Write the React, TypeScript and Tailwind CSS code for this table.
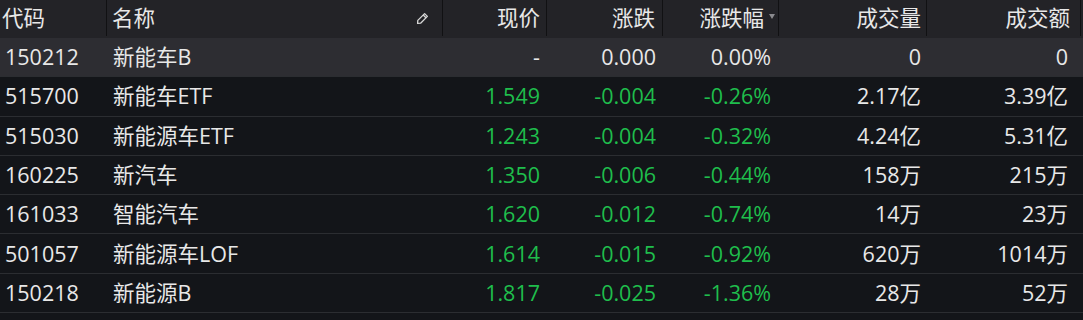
import React from "react";

type Row = {
  code: string;
  name: string;
  price: string;
  change: string;
  pct: string;
  vol: string;
  amt: string;
  down: boolean;
};

const rows: Row[] = [
  { code: "150212", name: "新能车B", price: "-", change: "0.000", pct: "0.00%", vol: "0", amt: "0", down: false },
  { code: "515700", name: "新能车ETF", price: "1.549", change: "-0.004", pct: "-0.26%", vol: "2.17亿", amt: "3.39亿", down: true },
  { code: "515030", name: "新能源车ETF", price: "1.243", change: "-0.004", pct: "-0.32%", vol: "4.24亿", amt: "5.31亿", down: true },
  { code: "160225", name: "新汽车", price: "1.350", change: "-0.006", pct: "-0.44%", vol: "158万", amt: "215万", down: true },
  { code: "161033", name: "智能汽车", price: "1.620", change: "-0.012", pct: "-0.74%", vol: "14万", amt: "23万", down: true },
  { code: "501057", name: "新能源车LOF", price: "1.614", change: "-0.015", pct: "-0.92%", vol: "620万", amt: "1014万", down: true },
  { code: "150218", name: "新能源B", price: "1.817", change: "-0.025", pct: "-1.36%", vol: "28万", amt: "52万", down: true },
];

const font = { fontFamily: '"Open Sans", "Noto Sans CJK SC", sans-serif' };

function Pencil() {
  return (
    <svg width="13" height="13" viewBox="0 0 13 13" fill="none" stroke="#d8d8d8" strokeWidth="1.3">
      <path d="M8.6 1.6 L11.4 4.4 L4.6 11.2 L1.6 11.4 L1.8 8.4 Z" strokeLinejoin="round" />
      <path d="M7.2 3 L10 5.8" />
    </svg>
  );
}

export default function App() {
  return (
    <div className="w-[1083px] h-[320px] bg-[#131519] overflow-hidden text-[21.5px] text-[#e8e8e8]" style={font}>
      {/* header */}
      <div className="flex h-[38px] bg-[#232327] leading-[36px]">
        <div className="w-[107px] pl-[2px] border-r border-[#111113] h-[36px]">代码</div>
        <div className="w-[336px] pl-[5px] pr-[13px] flex items-center justify-between border-r border-[#111113] h-[36px]">
          <span>名称</span>
          <Pencil />
        </div>
        <div className="w-[104px] pr-[6px] text-right border-r border-[#111113] h-[36px]">现价</div>
        <div className="w-[116px] pr-[7px] text-right border-r border-[#111113] h-[36px]">涨跌</div>
        <div className="w-[116px] pr-[3px] flex items-center justify-end gap-[5px] border-r border-[#111113] h-[36px]">
          <span>涨跌幅</span>
          <span className="w-0 h-0 border-l-[3.5px] border-r-[3.5px] border-t-[5px] border-l-transparent border-r-transparent border-t-[#8a8a8e] mb-[4px]"></span>
        </div>
        <div className="w-[148px] pr-[5px] text-right border-r border-[#111113] h-[36px]">成交量</div>
        <div className="w-[154px] pr-[10px] text-right border-r border-[#111113] h-[36px]">成交额</div>
      </div>
      {rows.map((r, i) => {
        const c = r.down ? "text-[#1fbe4c]" : "";
        return (
          <div
            key={r.code}
            className={`flex h-[39.3px] items-center border-b border-[#2b2d31] ${i === 0 ? "bg-[#2d2d32]" : ""}`}
          >
            <div className="w-[107px] pl-[5px]">{r.code}</div>
            <div className="w-[336px] pl-[6px]">{r.name}</div>
            <div className={`w-[104px] pr-[7px] text-right ${c}`}>{r.price}</div>
            <div className={`w-[116px] pr-[7px] text-right ${c}`}>{r.change}</div>
            <div className={`w-[116px] pr-[8px] text-right ${c}`}>{r.pct}</div>
            <div className="w-[148px] pr-[6px] text-right">{r.vol}</div>
            <div className="w-[154px] pr-[13px] text-right">{r.amt}</div>
          </div>
        );
      })}
    </div>
  );
}
